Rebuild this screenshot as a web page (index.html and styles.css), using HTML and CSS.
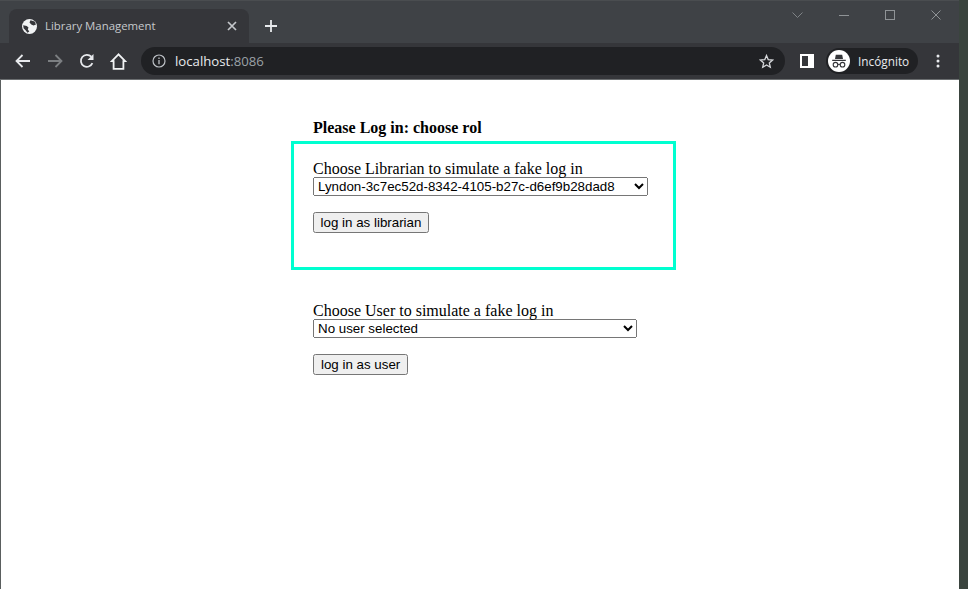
FILE: index.html
```html
<!DOCTYPE html>
<html lang="en">
<head>
<meta charset="utf-8">
<title>Library Management</title>
<link rel="stylesheet" href="styles.css">
</head>
<body>
<div class="window">
  <div class="viewport-col">
    <header class="chrome">
      <div class="tabstrip">
        <div class="tab">
          <svg class="favicon" width="15" height="15" viewBox="0 0 15 15"><circle cx="7.500" cy="7.500" r="7.500" fill="#f1f3f4"/><path d="M8.500 1.200 12.600 2.600 14 5.400 11.500 6.400 9.300 5.500 7.500 3.400ZM1.200 6.300 4.800 6.900 6.500 8.600 5.800 10.500 7.300 12.600 5.400 13.700 3.800 11.500 1.600 9.200Z" fill="#35363a"/></svg>
          <span class="tab-title">Library Management</span>
          <svg class="tab-close" width="10" height="10" viewBox="0 0 10 10"><path d="M1 1l8 8M9 1l-8 8" stroke="#c4c7ca" stroke-width="1.700"/></svg>
        </div>
        <svg class="newtab" width="14" height="14" viewBox="0 0 14 14"><path d="M7 1v12M1 7h12" stroke="#e8eaed" stroke-width="1.800"/></svg>
        <div class="winbtns">
          <svg class="win-chevron" width="11" height="6" viewBox="0 0 11 6"><path d="M.5.5 5.500 5.500l5-5" fill="none" stroke="#7f8386"/></svg>
          <svg class="win-min" width="10" height="1" viewBox="0 0 10 1"><path d="M0 .5h10" stroke="#8f9396"/></svg>
          <svg class="win-max" width="10" height="10" viewBox="0 0 10 10"><rect x=".5" y=".5" width="9" height="9" fill="none" stroke="#8f9396"/></svg>
          <svg class="win-close" width="10" height="10" viewBox="0 0 10 10"><path d="M.5.500l9 9M9.500.5l-9 9" stroke="#8f9396"/></svg>
        </div>
      </div>
      <div class="toolbar">
        <svg class="tool tool-back" width="16" height="14" viewBox="0 0 16 14"><path d="M15 7H2M7.500 1 1.500 7l6 6" fill="none" stroke="#e8eaed" stroke-width="1.800"/></svg>
        <svg class="tool tool-fwd" width="16" height="14" viewBox="0 0 16 14"><path d="M1 7h13M8.500 1l6 6-6 6" fill="none" stroke="#7c7f82" stroke-width="1.800"/></svg>
        <svg class="tool tool-reload" width="16" height="16" viewBox="0 0 16 16"><path d="M13.400 10.200A6 6 0 1 1 12.300 3.700" fill="none" stroke="#e8eaed" stroke-width="1.800"/><path d="M14.500 1v6h-6z" fill="#e8eaed"/></svg>
        <svg class="tool tool-home" width="17" height="17" viewBox="0 0 17 17"><path d="M8.500 1.300 1.800 8.200H3.600V15.800H13.400V8.200H15.200Z" fill="none" stroke="#f1f3f4" stroke-width="1.800" stroke-linejoin="miter"/></svg>
        <div class="omnibox">
          <svg class="info" width="14" height="14" viewBox="0 0 14 14"><circle cx="7" cy="7" r="6" fill="none" stroke="#bdc1c6" stroke-width="1.200"/><path d="M7 6v4.200M7 3.600v1.300" stroke="#bdc1c6" stroke-width="1.300"/></svg>
          <span class="url"><span class="host">localhost</span><span class="port">:8086</span></span>
          <svg class="star" width="15" height="15" viewBox="0 0 15 15"><path d="M7.500 1.500 9.200 5.600l4.400.4-3.300 2.900 1 4.300-3.800-2.300-3.800 2.300 1-4.300L1.400 6l4.400-.4z" fill="none" stroke="#d5d7da" stroke-width="1.300"/></svg>
        </div>
        <svg class="sidepanel" width="14" height="14" viewBox="0 0 14 14"><rect width="14" height="14" fill="#fff"/><rect x="2" y="2" width="6" height="10" fill="#35363a"/></svg>
        <div class="profile">
          <svg class="avatar" width="22" height="22" viewBox="0 0 22 22"><circle cx="11" cy="11" r="11" fill="#fff"/><path d="M7.800 4.800h6.400l.8 4.200H7zM4.200 9.800h13.600v1.100H4.200z" fill="#35363a"/><circle cx="7.500" cy="14.700" r="2.300" fill="none" stroke="#35363a" stroke-width="1.100"/><circle cx="14.500" cy="14.700" r="2.300" fill="none" stroke="#35363a" stroke-width="1.100"/><path d="M9.800 14.400h2.400" stroke="#35363a"/></svg>
          <span class="profile-name">Incógnito</span>
        </div>
        <svg class="menu" width="4" height="14" viewBox="0 0 4 14"><circle cx="2" cy="2" r="1.500" fill="#e8eaed"/><circle cx="2" cy="7" r="1.500" fill="#e8eaed"/><circle cx="2" cy="12" r="1.500" fill="#e8eaed"/></svg>
      </div>
    </header>
    <main class="page">
      <h1 class="title">Please Log in: choose rol</h1>
      <form class="panel panel-librarian">
        <label class="field-label" for="librarian">Choose Librarian to simulate a fake log in</label>
        <select class="picker picker-librarian" id="librarian">
          <option>Lyndon-3c7ec52d-8342-4105-b27c-d6ef9b28dad8</option>
        </select>
        <button class="action action-librarian" type="button">log in as librarian</button>
      </form>
      <form class="panel panel-user">
        <label class="field-label" for="user">Choose User to simulate a fake log in</label>
        <select class="picker picker-user" id="user">
          <option>No user selected</option>
        </select>
        <button class="action" type="button">log in as user</button>
      </form>
    </main>
  </div>
  <div class="desktop-strip"></div>
</div>
</body>
</html>
```
FILE: styles.css
```css
* { box-sizing: border-box; }
html, body { margin: 0; padding: 0; height: 100%; overflow: hidden; }
body { background: #fff; font-family: "Liberation Serif", serif; }
.window { display: flex; width: 968px; height: 589px; }
.viewport-col { width: 959px; height: 589px; display: flex; flex-direction: column; border-left: 1px solid #5a5e5e; flex: none; }
.desktop-strip { flex: 1; background: #3a443e; }

.chrome { flex: none; height: 80px; margin-left: -1px; background: #35363a; border-bottom: 1px solid #6b6e70; }
.tabstrip { height: 43px; background: #3f4246; border-top: 1px solid #4a4d50; display: flex; align-items: flex-start; padding-left: 9px; }
.tab { width: 240px; height: 34px; margin-top: 8px; background: #35363a; border-radius: 8px 8px 0 0; display: flex; align-items: center; padding-left: 13px; }
.favicon { flex: none; }
.tab-title { margin-left: 8px; padding-bottom: 2px; font: 11.400px "Open Sans", "Liberation Sans", sans-serif; color: #c6c9cc; flex: 1; white-space: nowrap; }
.tab-close { margin-right: 12px; flex: none; }
.newtab { margin: 18px 0 0 15px; flex: none; }
.winbtns { margin-left: auto; display: flex; align-items: center; height: 28px; }
.win-chevron { margin-right: 36px; }
.win-min { margin-right: 36px; }
.win-max { margin-right: 36px; }
.win-close { margin-right: 18px; }

.toolbar { height: 36px; display: flex; align-items: center; padding-left: 15px; }
.tool { flex: none; }
.tool-fwd { margin-left: 16px; }
.tool-reload { margin-left: 16px; }
.tool-home { margin-left: 15px; }
.omnibox { width: 644px; height: 28px; margin-left: 14px; background: #202124; border-radius: 14px; display: flex; align-items: center; padding: 0 11px; }
.info { flex: none; }
.url { margin-left: 9px; flex: 1; font: 13.200px "Open Sans", "Liberation Sans", sans-serif; }
.host { color: #e8eaed; }
.port { color: #9aa0a6; }
.star { flex: none; }
.sidepanel { margin-left: 15px; flex: none; }
.profile { width: 92px; height: 26px; margin-left: 12px; background: #202124; border-radius: 13px; display: flex; align-items: center; padding-left: 2px; flex: none; }
.profile-name { margin-left: 8px; font: 11.800px "Open Sans", "Liberation Sans", sans-serif; color: #e8eaed; }
.menu { margin-left: 18px; flex: none; }

.page { flex: 1; background: #fff; padding: 39px 0 0 312px; color: #000; }
.title { margin: 0 0 4px; font-size: 16px; line-height: 18px; font-weight: bold; }
.panel { display: block; }
.panel-librarian { width: 385px; height: 129px; margin-left: -22px; border: 3px solid #00ffd0; padding: 16px 0 0 19px; }
.panel-user { margin-top: 32px; }
.field-label { display: block; font-size: 16px; line-height: 17px; }
.picker { display: block; height: 19px; font: 13.333px "Liberation Sans", Arial, sans-serif; }
.picker-librarian { width: 335px; }
.picker-user { width: 324px; }
.action { display: block; height: 21px; margin-top: 16px; font: 13.333px "Liberation Sans", Arial, sans-serif; padding: 1px 6px; }
.action-librarian { width: 116px; padding: 1px 0; }
```
